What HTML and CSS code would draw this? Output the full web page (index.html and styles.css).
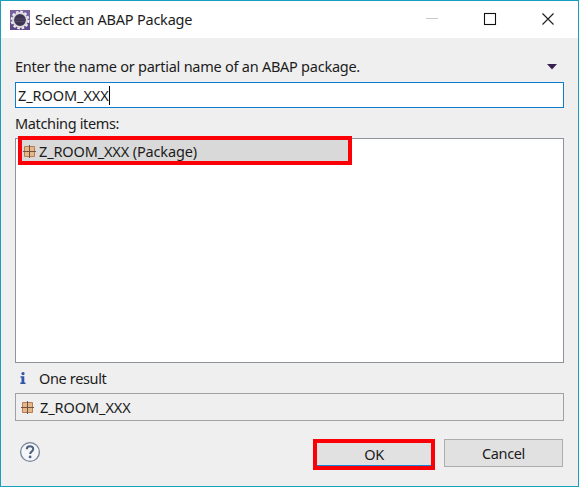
FILE: index.html
```html
<!DOCTYPE html>
<html lang="en">
<head>
<meta charset="utf-8">
<title>Select an ABAP Package</title>
<link rel="stylesheet" href="styles.css">
</head>
<body>
<svg width="0" height="0" class="defs" aria-hidden="true">
  <symbol id="package" viewBox="0 0 13 13">
    <rect x="1" y="1" width="11" height="11" rx="1" fill="#b87c57"/>
    <path d="M2 2h4v4H2zM7 2h4v4H7zM2 7h4v4H2zM7 7h4v4H7z" fill="#e3b88a"/>
    <path d="M6.5 0v13M0 6.5h13" stroke="#75503f" stroke-width="1"/>
  </symbol>
</svg>
<div class="dialog">
  <header class="titlebar">
    <svg class="app-icon" width="20" height="20" viewBox="0 0 20 20">
      <rect width="20" height="20" fill="#75619d"/>
      <rect y="13" width="20" height="7" fill="#5d4888"/>
      <circle cx="10" cy="10" r="8.3" fill="none" stroke="#eeeaf0" stroke-width="2.2" stroke-dasharray="2.6 1.746"/>
      <circle cx="10" cy="10" r="6.9" fill="#3b3550" stroke="#dcd8df" stroke-width="2"/>
      <path d="M5 9h10M5 11.5h10" stroke="#554b70" stroke-width="1"/>
    </svg>
    <h1 class="title">Select an ABAP Package</h1>
    <svg class="controls" width="126" height="14" viewBox="0 0 126 14" fill="none">
      <path d="M0 5.5h12" stroke="#cbcbcb"/>
      <rect x="58.5" y=".5" width="11" height="11" stroke="#111" stroke-width="1.1"/>
      <path d="M116.5 .5l11 11M127.5 .5l-11 11" stroke="#222" stroke-width="1.2"/>
    </svg>
  </header>
  <main class="content">
    <div class="prompt">
      <label class="prompt-text">Enter the name or partial name of an ABAP package.</label>
      <svg width="10" height="6" viewBox="0 0 10 6"><path d="M0 0h10L5 5.6z" fill="#37204f"/></svg>
    </div>
    <div class="field"><span class="value">Z_ROOM_XXX</span><i class="caret"></i></div>
    <div class="matching"><span class="matching-text">Matching items:</span></div>
    <div class="list">
      <div class="item">
        <svg width="13" height="13"><use href="#package"/></svg>
        <span class="item-text">Z_ROOM_XXX (Package)</span>
      </div>
    </div>
    <div class="status">
      <svg width="6" height="12" viewBox="0 0 6 12" fill="#3156a8"><circle cx="3" cy="1.6" r="1.6"/><path d="M.5 4.3h3.8v6.2h1.2V12H.3v-1.5h1.2V5.7h-1z"/></svg>
      <span class="status-text">One result</span>
    </div>
    <div class="result">
      <svg width="13" height="13"><use href="#package"/></svg>
      <span class="result-text">Z_ROOM_XXX</span>
    </div>
    <footer class="actions">
      <svg class="help" width="22" height="22" viewBox="0 0 22 22" fill="none">
        <circle cx="11" cy="11" r="9.4" fill="#f5f6f8" stroke="#75829a" stroke-width="1.3"/>
        <path d="M7.8 8.2C7.8 4.2 14.2 4.3 14.2 8c0 2.5-3 2.4-3 5" stroke="#51617f" stroke-width="2.1"/>
        <circle cx="11.1" cy="15.9" r="1.4" fill="#51617f"/>
      </svg>
      <div class="button ok"><span class="ok-text">OK</span></div>
      <div class="button cancel"><span class="cancel-text">Cancel</span></div>
    </footer>
  </main>
</div>
</body>
</html>
```
FILE: styles.css
```css
* { box-sizing: border-box; }
body { margin: 0; font: 14.5px/20px "Noto Sans", "Open Sans", sans-serif; color: #1c1c1c; letter-spacing: -0.35px; white-space: nowrap; }
svg { display: block; flex: none; }
.defs { position: absolute; }
.dialog { width: 579px; height: 487px; border: 1px solid #189fbe; background: #efefef; overflow: hidden; }
.titlebar { height: 37px; background: #fff; display: flex; align-items: center; padding: 0 26px 0 9px; }
.title { margin: 0 auto 0 5px; padding-bottom: 1px; font-size: 14.5px; font-weight: 400; line-height: 20px; letter-spacing: -0.23px; }
.controls { overflow: visible; }
.content { padding: 0 14px; }
.prompt { height: 44px; padding: 18px 7px 0 0; display: flex; justify-content: space-between; letter-spacing: -0.25px; }
.prompt svg { margin-top: 8px; }
.field { height: 26px; border: 1px solid #0f7dcb; background: #fff; display: flex; align-items: center; padding-left: 2px; }
.value, .result-text { letter-spacing: -0.08px; }
.caret { width: 1px; height: 19px; background: #000; }
.matching { height: 30px; padding-top: 5px; }
.list { height: 225px; border: 1px solid #8d929b; background: #fff; padding-left: 2px; }
.item { width: 334px; height: 29px; margin-top: -3px; position: relative; border: 4px solid #fb0007; background: #d9d9d9; display: flex; align-items: center; padding: 1px 0 0 1px; gap: 3px; letter-spacing: -0.14px; }
.item-text { padding-bottom: 1px; }
.status { height: 30px; display: flex; align-items: center; padding: 0 0 0 5px; gap: 13px; }
.status-text { padding-bottom: 1px; }
.result { height: 28px; border: 1px solid #a0a1a5; display: flex; align-items: center; padding-left: 5px; gap: 6px; }
.actions { display: flex; padding: 18px 1px 0 4px; }
.help { margin: 2px auto 0 0; }
.button { display: flex; align-items: center; justify-content: center; background: #e1e1e1; }
.ok { width: 122px; height: 31px; border: 4px solid #fb0007; border-bottom-width: 4px; box-shadow: inset 0 -1px #1683d8; margin-right: 9px; padding-bottom: 2px; }
.cancel { width: 119px; height: 28px; border: 1px solid #adadad; }
```
